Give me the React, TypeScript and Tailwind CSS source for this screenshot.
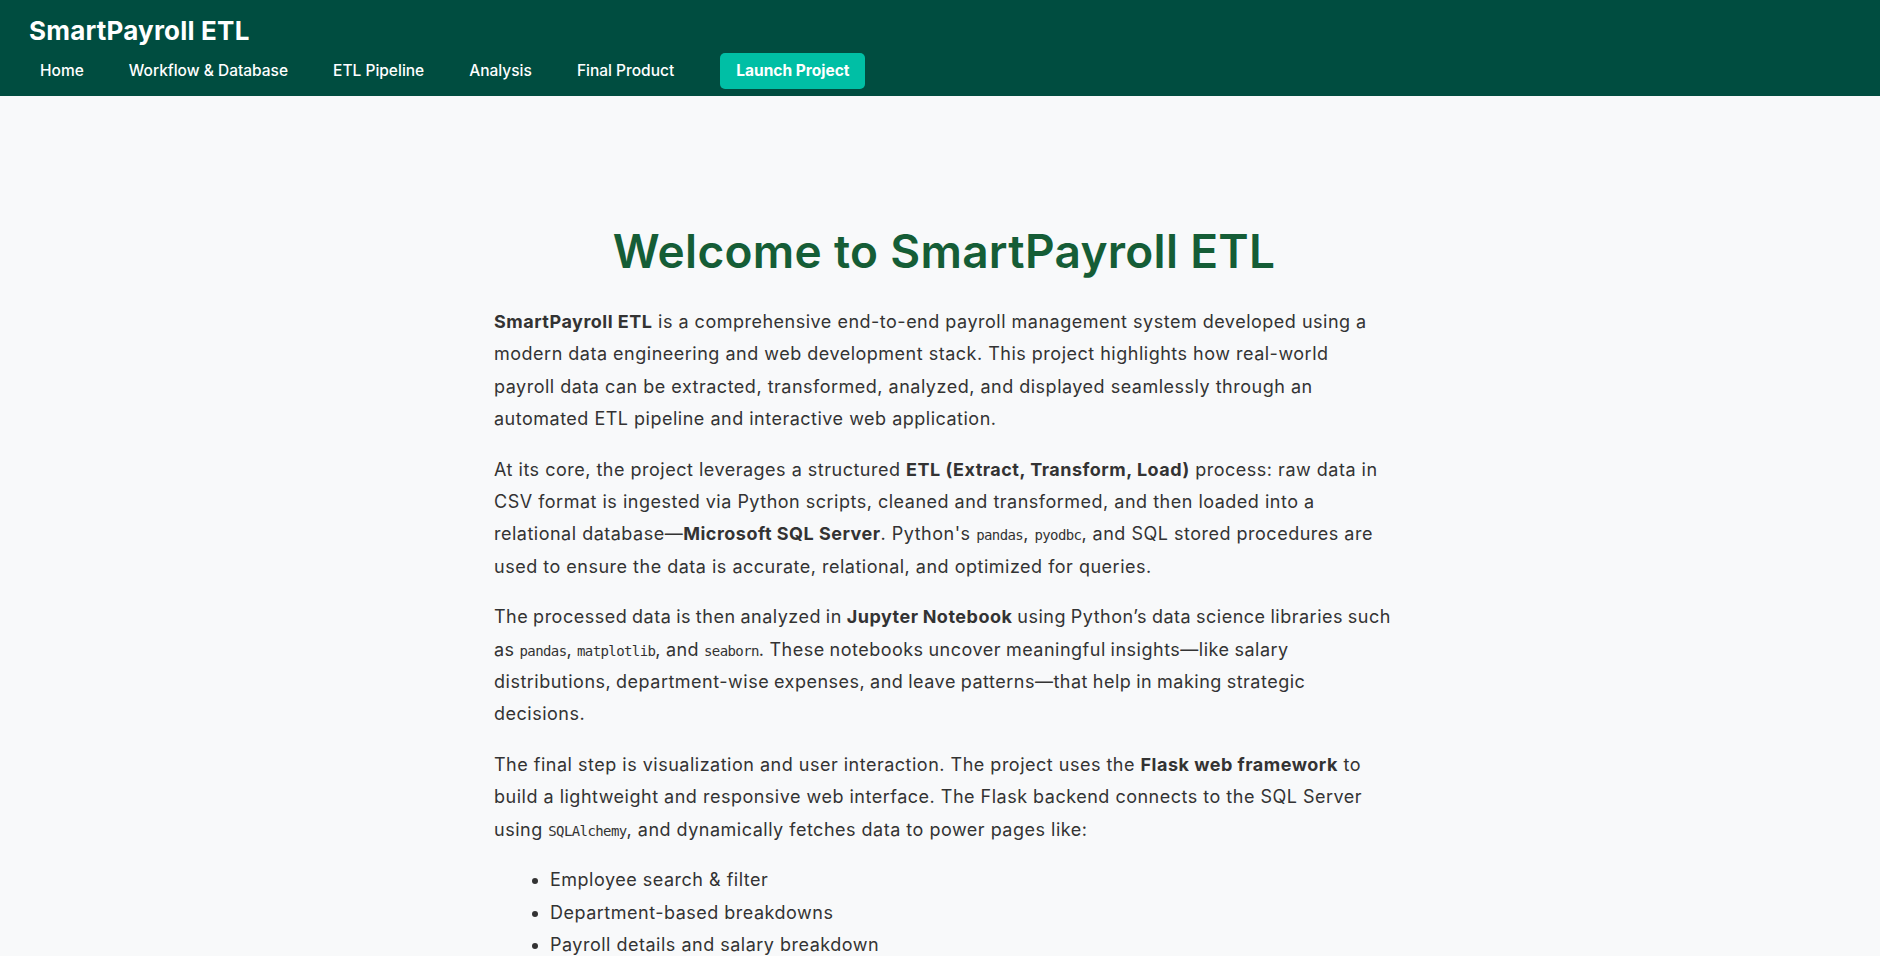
import React from 'react';

const navItems = ['Home', 'Workflow & Database', 'ETL Pipeline', 'Analysis', 'Final Product'];

function Code({ children }: { children: React.ReactNode }) {
  return (
    <code className="font-['DejaVu_Sans_Mono',monospace] text-[14px] leading-[0] tracking-[-0.6px]">{children}</code>
  );
}

export default function App() {
  return (
    <div className="min-h-screen bg-[#f8f9fa] font-['Inter',sans-serif] text-[#333]">
      {/* Header */}
      <header className="h-[96px] bg-[#004d40] px-[29px] pt-[16px] text-white">
        <h1 className="text-[26px] font-bold leading-[30px] tracking-[0.2px]">SmartPayroll ETL</h1>
        <nav className="mt-[7px] flex items-center gap-[23px]">
          {navItems.map((item) => (
            <a key={item} href="#" className="px-[11px] text-[15.5px] font-medium leading-[36px]">
              {item}
            </a>
          ))}
          <a
            href="#"
            className="ml-[12px] rounded-[5px] bg-[#00bfa5] px-4 text-[15.5px] font-bold leading-[36px] text-white"
          >
            Launch Project
          </a>
        </nav>
      </header>

      {/* Intro */}
      <main className="flex justify-center pl-2 pt-[128px]">
        <div className="w-[900px]">
          <h2 className="mb-[28px] text-center text-[46px] font-semibold leading-[54px] tracking-[0.3px] text-[#155d36]">
            Welcome to SmartPayroll ETL
          </h2>

          <div className="space-y-[18px] text-[18px] leading-[32.4px] tracking-[0.5px]">
            <p>
              <strong className="font-bold">SmartPayroll ETL</strong> is a comprehensive end-to-end payroll management
              system developed using a modern data engineering and web development stack. This project highlights how
              real-world payroll data can be extracted, transformed, analyzed, and displayed seamlessly through an
              automated ETL pipeline and interactive web application.
            </p>
            <p>
              At its core, the project leverages a structured <strong className="font-bold">ETL (Extract, Transform, Load)</strong>{' '}
              process: raw data in CSV format is ingested via Python scripts, cleaned and transformed, and then loaded
              into a relational database—<strong className="font-bold">Microsoft SQL Server</strong>. Python's{' '}
              <Code>pandas</Code>, <Code>pyodbc</Code>, and SQL stored procedures are used to ensure the data is
              accurate, relational, and optimized for queries.
            </p>
            <p className="[word-spacing:-0.7px]">
              The processed data is then analyzed in <strong className="font-bold">Jupyter Notebook</strong> using
              Python’s data science libraries such as <Code>pandas</Code>, <Code>matplotlib</Code>, and{' '}
              <Code>seaborn</Code>. These notebooks uncover meaningful insights—like salary distributions,
              department-wise expenses, and leave patterns—that help in making strategic decisions.
            </p>
            <p>
              The final step is visualization and user interaction. The project uses the{' '}
              <strong className="font-bold">Flask web framework</strong> to build a lightweight and responsive web
              interface. The Flask backend connects to the SQL Server using <Code>SQLAlchemy</Code>, and dynamically
              fetches data to power pages like:
            </p>
            <ul className="mt-[2px] list-disc pl-[56px] marker:text-[#333]">
              <li>Employee search &amp; filter</li>
              <li>Department-based breakdowns</li>
              <li>Payroll details and salary breakdown</li>
              <li>Leave tracking and attendance</li>
            </ul>
          </div>
        </div>
      </main>
    </div>
  );
}
